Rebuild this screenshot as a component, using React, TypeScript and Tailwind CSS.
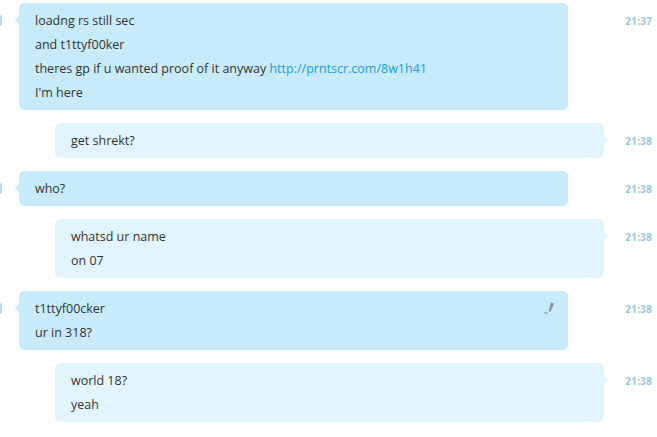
import React from "react";

type Msg = {
  dir: "in" | "out";
  time: string;
  lines: React.ReactNode[];
  edited?: boolean;
};

const messages: Msg[] = [
  {
    dir: "in",
    time: "21:37",
    lines: [
      "loadng rs still sec",
      "and t1ttyf00ker",
      <>
        theres gp if u wanted proof of it anyway{" "}
        <span className="text-[#1a9dd9]">http://prntscr.com/8w1h41</span>
      </>,
      "I'm here",
    ],
  },
  { dir: "out", time: "21:38", lines: ["get shrekt?"] },
  { dir: "in", time: "21:38", lines: ["who?"] },
  { dir: "out", time: "21:38", lines: ["whatsd ur name", "on 07"] },
  { dir: "in", time: "21:38", lines: ["t1ttyf00cker", "ur in 318?"], edited: true },
  { dir: "out", time: "21:38", lines: ["world 18?", "yeah"] },
];

function Pencil() {
  return (
    <svg width="11" height="12" viewBox="0 0 11 12" className="absolute right-[13px] top-[11px]">
      <path d="M7 0.5 L10 1.5 L7 9 L5.5 10 L4.8 8 Z" fill="#8c989f" />
      <rect x="0" y="10.5" width="4" height="1" fill="#8c989f" />
    </svg>
  );
}

function Row({ m }: { m: Msg }) {
  const incoming = m.dir === "in";
  return (
    <div className="flex items-start">
      {incoming ? (
        <div className="mt-[12px] h-[11px] w-[2px] rounded-r-sm bg-[#b4dcec]" />
      ) : (
        <div className="w-[2px]" />
      )}
      <div className={incoming ? "ml-[17px]" : "ml-[53px]"}>
        <div
          className={`relative w-[549px] rounded-[5px] pb-[5px] pl-[16px] pt-[6px] leading-[24px] ${
            incoming ? "bg-[#c7ebfa]" : "bg-[#e3f5fc]"
          }`}
        >
          {incoming ? (
            <div className="absolute left-[-3px] top-[14px] h-[6px] w-[6px] rotate-45 bg-[#c7ebfa]" />
          ) : (
            <div className="absolute right-[-3px] top-[14px] h-[6px] w-[6px] rotate-45 bg-[#e3f5fc]" />
          )}
          {m.lines.map((l, i) => (
            <div key={i} className="relative">
              {l}
            </div>
          ))}
          {m.edited && <Pencil />}
        </div>
      </div>
      <div className="ml-auto pr-[5px] pt-[6px] text-[10.5px] font-bold leading-[24px] text-[#a3c7da]">
        {m.time}
      </div>
    </div>
  );
}

export default function App() {
  return (
    <div
      className="flex h-[437px] w-[657px] flex-col gap-[13px] overflow-hidden bg-white pt-[3px] text-[12.5px] text-[#333333]"
      style={{ fontFamily: '"Open Sans", "Noto Sans", sans-serif' }}
    >
      {messages.map((m, i) => (
        <Row key={i} m={m} />
      ))}
    </div>
  );
}
